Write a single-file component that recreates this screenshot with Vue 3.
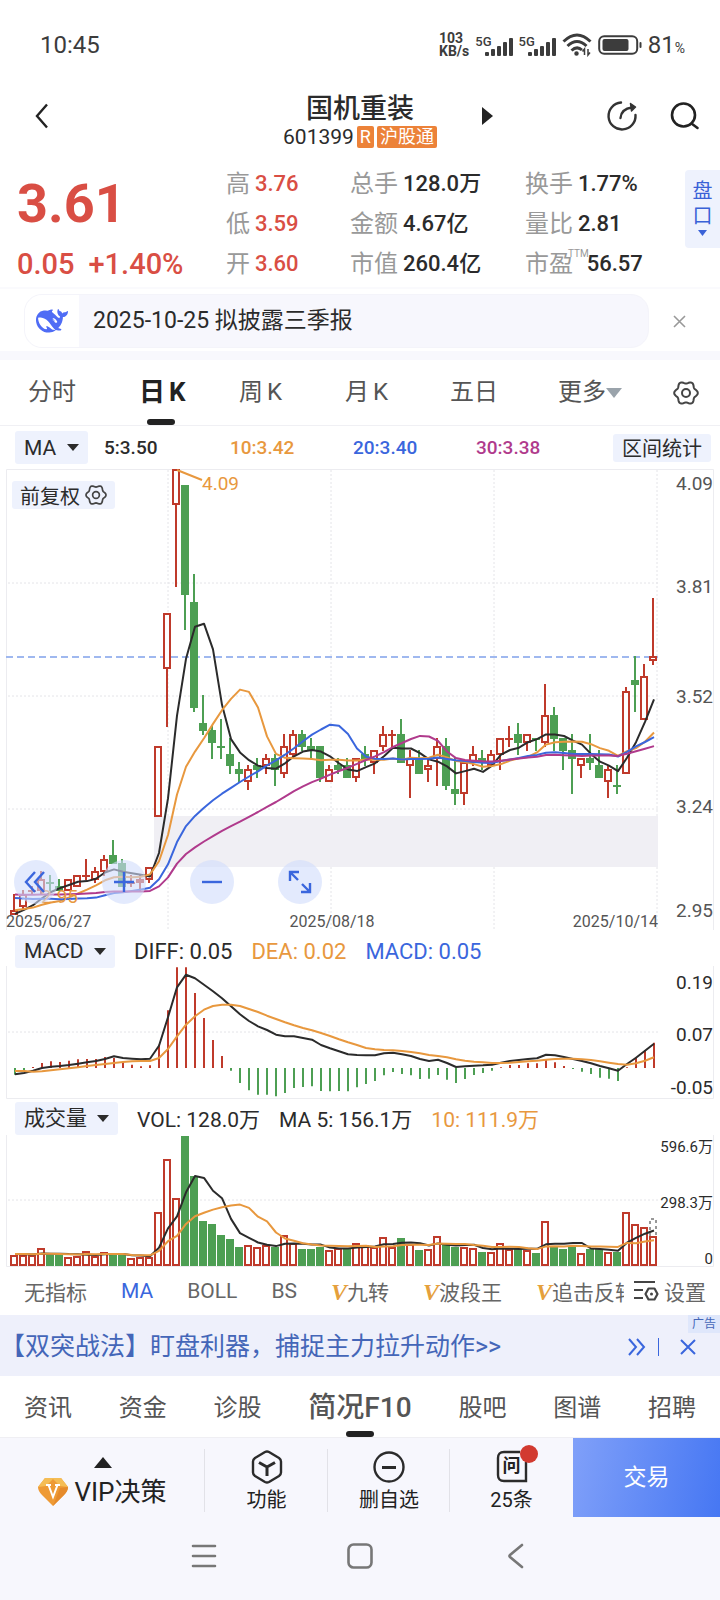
<template>
  <div class="app">
    <header class="status-bar">
      <span class="clock">10:45</span>
      <div class="status-icons">
        <span class="net-speed">103<br />KB/s</span>
        <span v-for="n in 2" :key="n" class="signal">
          <small>5G</small>
          <svg width="28" height="18" viewBox="0 0 28 18" fill="#3c3c3c">
            <rect x="0" y="14" width="4" height="4" rx="1" />
            <rect x="6" y="11" width="4" height="7" rx="1" />
            <rect x="12" y="8" width="4" height="10" rx="1" />
            <rect x="18" y="4" width="4" height="14" rx="1" />
            <rect x="24" y="0" width="4" height="18" rx="1" />
          </svg>
        </span>
        <svg class="wifi" width="30" height="24" viewBox="0 0 30 24" fill="none" stroke="#3c3c3c" stroke-width="3">
          <path d="M1.500 8.500 Q15 -4.500 28.500 8.500" />
          <path d="M5.500 13 Q15 4 24.500 13" />
          <path d="M9.500 17.500 Q15 12.500 20 17" />
          <circle cx="14.500" cy="20.500" r="1.500" fill="#3c3c3c" stroke-width="1.500" />
          <path d="M22.500 22 V16 L20.500 18.500 M26 16 V22 L28 19.500" stroke-width="1.500" />
        </svg>
        <svg width="44" height="20" viewBox="0 0 44 20">
          <rect x="1.200" y="1.200" width="38" height="17.600" rx="5" fill="none" stroke="#3c3c3c" stroke-width="2" />
          <rect x="4.500" y="4" width="26" height="12" rx="2" fill="#3c3c3c" />
          <rect x="41.500" y="7" width="2" height="6" rx="1" fill="#3c3c3c" />
        </svg>
        <span class="battery">81<small>%</small></span>
      </div>
    </header>

    <div class="title-bar">
      <button class="icon-btn back" aria-label="返回">
        <svg width="14" height="26" viewBox="0 0 14 26" fill="none" stroke="#222" stroke-width="2.400">
          <path d="M12 1.500 L2 13 L12 24.500" />
        </svg>
      </button>
      <div class="stock">
        <h1>国机重装</h1>
        <p class="code">601399<span class="tag">R</span><span class="tag">沪股通</span></p>
      </div>
      <div class="title-actions">
        <button class="icon-btn next" aria-label="下一只">
          <svg width="11" height="18" viewBox="0 0 11 18"><path d="M0 0 L11 9 L0 18z" fill="#222" /></svg>
        </button>
        <button class="icon-btn" aria-label="分享">
          <svg width="32" height="32" viewBox="0 0 32 32" fill="none" stroke="#333" stroke-width="2.400" stroke-linecap="round">
            <path d="M15 2.500 A13.500 13.500 0 1 0 29.500 15" />
            <path d="M14.500 18 C15 12 18 8.500 26 7.500" />
            <path d="M24.500 3.500 L29.500 7 L25.500 11z" fill="#333" stroke-width="1.500" stroke-linejoin="round" />
          </svg>
        </button>
        <button class="icon-btn" aria-label="搜索">
          <svg width="30" height="28" viewBox="0 0 30 28" fill="none" stroke="#222" stroke-width="2.600" stroke-linecap="round">
            <circle cx="13.500" cy="13" r="11.500" />
            <path d="M21.500 21.500 L27.500 26" />
          </svg>
        </button>
      </div>
    </div>

    <section class="quote">
      <div class="price">
        <strong>3.61</strong>
        <p><span>0.05</span><span>+1.40%</span></p>
      </div>
      <dl v-for="(col, i) in quotes" :key="i">
        <div v-for="q in col" :key="q.label">
          <dt>{{ q.label }}<sup v-if="q.sup">{{ q.sup }}</sup></dt>
          <dd :class="{ up: q.up }">{{ q.value }}</dd>
        </div>
      </dl>
      <button class="pan-kou">
        <span>盘</span><span>口</span>
        <svg width="9" height="6" viewBox="0 0 9 6"><path d="M0 0h9L4.500 6z" fill="#3a62d7" /></svg>
      </button>
    </section>

    <div class="notice">
      <a href="#" class="notice-pill">
        <span class="whale">
          <svg width="32" height="32" viewBox="0 0 24 24" fill="#4f6cf5">
            <path d="M23.748 4.482c-.254-.124-.364.113-.512.234-.051.039-.094.09-.137.136-.372.397-.806.657-1.373.626-.829-.046-1.537.214-2.163.848-.133-.782-.575-1.248-1.247-1.548-.352-.156-.708-.311-.955-.65-.172-.241-.219-.51-.305-.774-.055-.16-.11-.323-.293-.35-.2-.031-.278.136-.356.276-.313.572-.434 1.202-.422 1.84.027 1.436.633 2.58 1.838 3.393.137.093.172.187.129.323-.082.28-.18.552-.266.833-.055.179-.137.217-.329.14a5.526 5.526 0 01-1.736-1.18c-.857-.828-1.631-1.742-2.597-2.458a11.365 11.365 0 00-.689-.471c-.985-.957.13-1.743.388-1.836.27-.098.093-.432-.779-.428-.872.004-1.67.295-2.687.684a3.055 3.055 0 01-.465.137 9.597 9.597 0 00-2.883-.102c-1.885.21-3.39 1.102-4.497 2.623C.082 8.606-.231 10.684.152 12.85c.403 2.284 1.569 4.175 3.36 5.653 1.858 1.533 3.997 2.284 6.438 2.14 1.482-.085 3.133-.284 4.994-1.86.47.234.962.327 1.78.397.63.059 1.236-.03 1.705-.128.735-.156.684-.837.419-.961-2.155-1.004-1.682-.595-2.113-.926 1.096-1.296 2.746-2.642 3.392-7.003.05-.347.007-.565 0-.845-.004-.17.035-.237.23-.256a4.173 4.173 0 001.545-.475c1.396-.763 1.96-2.015 2.093-3.517.02-.23-.004-.467-.247-.588zM11.581 18c-2.089-1.642-3.102-2.183-3.52-2.16-.392.024-.321.471-.235.763.09.288.207.486.371.739.114.167.192.416-.113.603-.673.416-1.842-.14-1.897-.167-1.361-.802-2.5-1.86-3.301-3.307-.774-1.393-1.224-2.887-1.298-4.482-.02-.386.093-.522.477-.592a4.696 4.696 0 011.529-.039c2.132.312 3.946 1.265 5.468 2.774.868.86 1.525 1.887 2.202 2.891.72 1.066 1.494 2.082 2.48 2.914.348.292.625.514.891.677-.802.09-2.14.11-3.054-.614zm1-6.44a.306.306 0 01.415-.287.302.302 0 01.2.288.306.306 0 01-.31.307.303.303 0 01-.304-.308zm3.11 1.596c-.2.081-.399.151-.59.16a1.245 1.245 0 01-.798-.254c-.274-.23-.47-.358-.552-.758a1.73 1.73 0 01.016-.588c.07-.327-.008-.537-.239-.727-.187-.156-.426-.199-.688-.199a.559.559 0 01-.254-.078c-.11-.054-.2-.19-.114-.358.028-.054.16-.186.192-.21.356-.202.767-.136 1.146.016.352.144.618.408 1.001.782.391.451.462.576.685.914.176.265.336.537.445.848.067.195-.019.354-.25.452z" />
          </svg>
        </span>
        <span class="notice-text">2025-10-25 拟披露三季报</span>
      </a>
      <button class="icon-btn close" aria-label="关闭">
        <svg width="13" height="13" viewBox="0 0 13 13" stroke="#999" stroke-width="1.600">
          <path d="M1 1 L12 12 M12 1 L1 12" />
        </svg>
      </button>
    </div>

    <nav class="period-tabs">
      <button v-for="t in periods" :key="t.name" :class="{ active: t.name === period }" @click="period = t.name">
        {{ t.name }}<span v-if="t.unit">{{ t.unit }}</span>
        <svg v-if="t.more" width="16" height="10" viewBox="0 0 16 10"><path d="M0 0h16L8 10z" fill="#9aa3ab" /></svg>
      </button>
      <button aria-label="设置">
        <svg width="26" height="26" viewBox="0 0 26 26" fill="none" stroke="#444" stroke-width="2">
          <path :d="gear" /><circle cx="13" cy="13" r="4" />
        </svg>
      </button>
    </nav>

    <div class="legend ma-legend">
      <label class="chip"><select aria-label="主图指标"><option>MA</option></select></label>
      <span class="num">5:3.50</span>
      <span class="num orange">10:3.42</span>
      <span class="num blue">20:3.40</span>
      <span class="num purple">30:3.38</span>
      <button class="chip-btn">区间统计</button>
    </div>

    <div class="kline">
      <svg viewBox="0 0 720 461" class="chart">
        <path d="M6.500 461 V0.500 H713.500 V461" class="frame" />
        <rect x="154" y="347" width="504" height="51" fill="#f0eff4" />
        <path v-for="gy in [114, 227, 340]" :key="gy" :d="`M8 ${gy} H658`" class="dots" />
        <path v-for="gx in [168, 331, 494, 657]" :key="gx" :d="`M${gx} 1 V347 M${gx} 398 V461`" class="dots" />
        <path d="M6 188 H658" stroke="#9fb8ef" stroke-width="2" stroke-dasharray="7 4" />
        <g v-for="(c, i) in candles" :key="i" :class="c.up ? 'rise' : 'fall'">
          <path :d="c.wick" />
          <path v-if="c.flat" :d="c.flat" />
          <rect v-else :x="c.x" :y="c.y" width="6" :height="c.h" />
        </g>
        <polyline v-for="m in maLines" :key="m.days" :points="m.points" :stroke="m.color" class="line" />
        <text x="41" y="434" class="mark">2.95</text>
        <path d="M177 1 L202 11" stroke="#e8983e" stroke-width="2" />
        <text x="202" y="21" class="mark">4.09</text>
        <text v-for="l in priceLabels" :key="l.text" x="713" :y="l.y" class="axis">{{ l.text }}</text>
        <text x="6" y="458" class="date">2025/06/27</text>
        <text x="332" y="458" class="date" text-anchor="middle">2025/08/18</text>
        <text x="658" y="458" class="date" text-anchor="end">2025/10/14</text>
      </svg>
      <button class="chip-btn restore">
        前复权
        <svg width="22" height="22" viewBox="0 0 26 26" fill="none" stroke="#444" stroke-width="2">
          <path :d="gear" /><circle cx="13" cy="13" r="4" />
        </svg>
      </button>
      <div class="tools">
        <button v-for="t in tools" :key="t.label" :aria-label="t.label">
          <svg width="28" height="28" viewBox="0 0 28 28" fill="none" stroke="#3a66dd" stroke-width="2.400">
            <path :d="t.d" />
          </svg>
        </button>
      </div>
    </div>

    <div class="legend sub-legend">
      <label class="chip"><select aria-label="副图指标"><option>MACD</option></select></label>
      <span>DIFF: 0.05</span>
      <span class="orange">DEA: 0.02</span>
      <span class="blue">MACD: 0.05</span>
    </div>
    <svg viewBox="0 0 720 133" class="chart">
      <path d="M6.500 0 V132.500 H713.500 V0" class="frame" />
      <path d="M8 66 H658" class="dots" />
      <path v-for="(b, i) in macd" :key="i" :d="b.d" :stroke="b.color" stroke-width="2" />
      <polyline :points="diffLine" stroke="#2b2b2b" class="line" />
      <polyline :points="deaLine" stroke="#e8983e" class="line" />
      <text x="713" y="23" class="axis dark">0.19</text>
      <text x="713" y="75" class="axis dark">0.07</text>
      <text x="713" y="128" class="axis dark">-0.05</text>
    </svg>

    <div class="legend sub-legend volume-legend">
      <label class="chip"><select aria-label="成交量指标"><option>成交量</option></select></label>
      <span>VOL: 128.0万</span>
      <span>MA 5: 156.1万</span>
      <span class="orange">10: 111.9万</span>
    </div>
    <svg viewBox="0 0 720 132" class="chart">
      <path d="M6.500 0 V131.500 H713.500 V0" class="frame" />
      <path d="M8 65 H658" class="dots" />
      <rect
        v-for="(b, i) in volumeBars"
        :key="i"
        :class="b.up ? 'rise' : 'fall'"
        :x="b.x"
        :y="b.y"
        width="6"
        :height="b.h"
      />
      <path d="M650 101 V84 H656 V101" fill="none" stroke="#333" stroke-dasharray="3 3" />
      <polyline v-for="m in volLines" :key="m.days" :points="m.points" :stroke="m.color" class="line" />
      <text x="713" y="17" class="axis small">596.6万</text>
      <text x="713" y="73" class="axis small">298.3万</text>
      <text x="713" y="129" class="axis small">0</text>
    </svg>

    <nav class="indicators">
      <div class="indicator-list">
        <button>无指标</button>
        <button class="blue">MA</button>
        <button>BOLL</button>
        <button>BS</button>
        <button v-for="v in ['九转', '波段王', '追击反转']" :key="v"><b>V</b>{{ v }}</button>
      </div>
      <button class="setup">
        <svg width="26" height="22" viewBox="0 0 26 22" fill="none" stroke="#444" stroke-width="2.200">
          <path d="M1 2 H22 M1 10 H10 M1 18 H10 M15.500 8.500 h6 l3 5.500 l-3 5.500 h-6 l-3 -5.500z" stroke-linejoin="round" />
          <circle cx="18.500" cy="14" r="1.500" fill="#444" stroke="none" />
        </svg>
        设置
      </button>
    </nav>

    <aside class="promo">
      <a href="#">【双突战法】盯盘利器，捕捉主力拉升动作&gt;&gt;</a>
      <svg width="18" height="18" viewBox="0 0 18 18" fill="none" stroke="#3a66dd" stroke-width="2">
        <path d="M1 1 L8 9 L1 17 M9 1 L16 9 L9 17" />
      </svg>
      <i></i>
      <button class="icon-btn" aria-label="关闭广告">
        <svg width="16" height="16" viewBox="0 0 16 16" stroke="#3a66dd" stroke-width="2">
          <path d="M1 1 L15 15 M15 1 L1 15" />
        </svg>
      </button>
      <small>广告</small>
    </aside>

    <nav class="info-tabs">
      <button v-for="t in infoTabs" :key="t" :class="{ active: t === infoTab }" @click="infoTab = t">{{ t }}</button>
    </nav>

    <footer class="actions">
      <button class="vip">
        <svg width="18" height="11" viewBox="0 0 18 11"><path d="M9 0 L18 11 H0z" fill="#222" /></svg>
        <span>
          <svg width="30" height="28" viewBox="0 0 30 28">
            <path d="M7 0 H23 L30 9 Q30 13 26 17 L15 28 L4 17 Q0 13 0 9z" fill="#ee9a35" />
            <path d="M7 0 H23 L30 9 L22 8 L15 1 L8 8 L0 9z" fill="#f5bd55" />
            <path d="M15 28 L26 17 Q30 13 30 9 L22 10z" fill="#e58a2b" />
            <path d="M8 7 h5 M17 7 h5 M10.500 7 L15 19 L19.500 7" fill="none" stroke="#fff" stroke-width="2" />
          </svg>
          VIP决策
        </span>
      </button>
      <button>
        <svg width="32" height="34" viewBox="0 0 32 34" fill="none" stroke="#2b2b2b" stroke-width="2.400" stroke-linejoin="round">
          <path d="M14 2 Q16 1 18 2 L28 8 Q30 9.500 30 11.500 V22.500 Q30 24.500 28 26 L18 32 Q16 33 14 32 L4 26 Q2 24.500 2 22.500 V11.500 Q2 9.500 4 8z" />
          <path d="M8 12.500 L16 17 L24 12.500 M16 17 V26" stroke-width="3" />
        </svg>
        功能
      </button>
      <button>
        <svg width="32" height="34" viewBox="0 0 32 34" fill="none" stroke="#2b2b2b" stroke-width="2.400">
          <circle cx="16" cy="17" r="14.500" />
          <path d="M9 17.500 H23" stroke-width="3" />
        </svg>
        删自选
      </button>
      <button>
        <span class="ask">
          <svg width="32" height="34" viewBox="0 0 32 34" fill="none" stroke="#2b2b2b" stroke-width="2.400">
            <path d="M30 12 V31 H8 Q2 31 2 25 V8 Q2 2 8 2 H24" />
          </svg>
          <em>问</em>
          <i class="dot"></i>
        </span>
        25条
      </button>
      <button class="trade">交易</button>
    </footer>

    <nav class="system-nav">
      <svg width="26" height="26" viewBox="0 0 26 26" fill="none" stroke="#777" stroke-width="2.600" stroke-linecap="round">
        <path d="M2 3 H24 M2 13 H24 M2 23 H24" />
      </svg>
      <svg width="26" height="26" viewBox="0 0 26 26" fill="none" stroke="#777" stroke-width="2.600">
        <rect x="1.500" y="1.500" width="23" height="23" rx="5" />
      </svg>
      <svg width="26" height="26" viewBox="0 0 26 26" fill="none" stroke="#777" stroke-width="2.600" stroke-linecap="round">
        <path d="M19 2 L7 12 Q6 13 7 14 L19 24" />
      </svg>
    </nav>
  </div>
</template>

<script setup>
import { ref } from "vue";

const period = ref("日");
const infoTab = ref("简况F10");

const quotes = [
  [
    { label: "高", value: "3.76", up: true },
    { label: "低", value: "3.59", up: true },
    { label: "开", value: "3.60", up: true },
  ],
  [
    { label: "总手", value: "128.0万" },
    { label: "金额", value: "4.67亿" },
    { label: "市值", value: "260.4亿" },
  ],
  [
    { label: "换手", value: "1.77%" },
    { label: "量比", value: "2.81" },
    { label: "市盈", value: "56.57", sup: "TTM" },
  ],
];

const periods = [
  { name: "分时" },
  { name: "日", unit: "K" },
  { name: "周", unit: "K" },
  { name: "月", unit: "K" },
  { name: "五日" },
  { name: "更多", more: true },
];

const infoTabs = ["资讯", "资金", "诊股", "简况F10", "股吧", "图谱", "招聘"];

const tools = [
  { label: "最早", d: "M13 4 L4 14 L13 24 M22 4 L13 14 L22 24" },
  { label: "放大", d: "M14 4 V24 M4 14 H24" },
  { label: "缩小", d: "M4 14 H24" },
  { label: "全屏", d: "M4 13 V4 H13 M4 4 L12 12 M24 15 V24 H15 M24 24 L16 16" },
];

const priceLabels = [
  { text: "4.09", y: 21 },
  { text: "3.81", y: 124 },
  { text: "3.52", y: 234 },
  { text: "3.24", y: 344 },
  { text: "2.95", y: 448 },
];

// open, high, low, close in cents
const days = [
  [295, 300, 295, 296], [297, 301, 296, 300], [301, 302, 300, 301], [301, 306, 300, 304],
  [303, 305, 301, 303], [302, 304, 301, 301], [301, 304, 301, 304], [302, 305, 302, 305],
  [305, 309, 304, 305], [304, 307, 303, 306], [306, 310, 305, 309], [310, 314, 308, 308],
  [308, 309, 302, 302], [303, 305, 302, 303], [303, 305, 301, 304], [304, 307, 303, 307],
  [320, 338, 320, 338], [358, 372, 343, 372], [400, 409, 379, 409], [405, 405, 368, 377],
  [375, 382, 347, 348], [344, 351, 341, 342], [342, 343, 335, 339], [338, 345, 335, 338],
  [336, 340, 331, 333], [332, 334, 329, 331], [329, 333, 327, 332], [333, 335, 330, 332],
  [333, 336, 331, 335], [335, 336, 328, 332], [331, 341, 330, 338], [336, 342, 335, 341],
  [341, 342, 337, 338], [338, 340, 335, 337], [338, 338, 329, 330], [329, 333, 329, 332],
  [333, 335, 331, 332], [333, 335, 330, 330], [330, 335, 329, 335], [336, 338, 333, 335],
  [334, 337, 331, 337], [338, 343, 337, 341], [341, 342, 338, 341], [341, 345, 334, 334],
  [333, 337, 325, 335], [335, 337, 331, 331], [332, 335, 329, 333], [335, 340, 328, 338],
  [338, 340, 327, 328], [327, 335, 323, 326], [326, 334, 323, 334], [334, 338, 333, 336],
  [335, 337, 332, 334], [333, 337, 333, 336], [336, 340, 332, 340], [340, 343, 338, 340],
  [341, 344, 336, 339], [339, 341, 337, 341], [340, 340, 337, 340], [339, 354, 338, 346],
  [346, 348, 337, 340], [340, 340, 332, 337], [337, 341, 326, 335], [333, 335, 330, 335],
  [335, 341, 332, 334], [333, 337, 330, 330], [329, 333, 325, 332], [328, 333, 326, 328],
  [331, 353, 331, 352], [355, 361, 347, 354], [345, 359, 345, 356], [360, 376, 359, 361],
];

const volumes = [
  52, 49, 49, 81, 52, 49, 43, 46, 70, 46, 63, 49, 49, 38, 43, 43, 248, 491, 314, 597, 415, 207, 193, 144,
  122, 89, 98, 86, 95, 89, 141, 104, 80, 80, 86, 73, 83, 80, 104, 95, 86, 133, 89, 129, 101, 72, 80, 138,
  95, 86, 86, 83, 64, 64, 104, 80, 77, 73, 61, 207, 92, 80, 89, 60, 80, 80, 64, 64, 246, 191, 177, 136,
];

// closes before the first visible day, needed by the long averages
const earlier = [
  ...Array(10).fill(302), ...Array(9).fill(303), ...Array(6).fill(297), ...Array(4).fill(295),
];

const macdBars = [
  -20, -8, 3, 15, 20, 18, 22, 26, 27, 27, 33, 30, 19, 10, 5, 8, 70, 173, 302, 302, 225, 150, 84, 36,
  -8, -45, -67, -80, -80, -85, -75, -60, -57, -55, -69, -70, -69, -70, -58, -48, -39, -22, -12, -18, -22, -33, -32, -21,
  -35, -45, -33, -21, -15, -8, 2, 9, 9, 14, 14, 24, 17, 6, -3, -11, -18, -29, -32, -39, 2, 32, 54, 76,
];
const diff = [
  -19, -15, -8, 0, 4, 6, 9, 13, 17, 21, 27, 35, 30, 28, 26, 28, 67, 152, 242, 280, 269, 250, 230, 209,
  185, 161, 141, 125, 114, 100, 95, 95, 90, 85, 69, 59, 50, 41, 39, 38, 38, 44, 46, 41, 36, 27, 21, 25,
  15, 3, 5, 7, 8, 10, 16, 21, 24, 27, 29, 40, 38, 33, 27, 21, 14, 6, -1, -8, 12, 31, 52, 73,
];
const dea = [
  -9, -9, -11, -10, -7, -4, -1, 2, 6, 9, 12, 15, 18, 20, 21, 21, 30, 57, 95, 130, 155, 175, 186, 190,
  190, 186, 177, 168, 157, 147, 137, 128, 120, 113, 105, 96, 86, 77, 69, 60, 56, 54, 53, 51, 48, 44, 39, 36,
  32, 26, 22, 19, 17, 15, 15, 16, 18, 20, 22, 25, 27, 28, 28, 26, 24, 20, 16, 12, 10, 14, 22, 32,
];

const STEP = 9;
const cx = (i) => 14 + i * STEP;
const priceY = (p) => Math.round((409 - p) * 3.9);
const toPoints = (values, y) => values.map((v, i) => `${cx(i) + 1},${y(v).toFixed(1)}`).join(" ");

const average = (values, before, n) => {
  const all = [...before, ...values];
  return values.map((_, i) => {
    const end = before.length + i + 1;
    return all.slice(end - n, end).reduce((a, b) => a + b, 0) / n;
  });
};

const closes = days.map((d) => d[3]);

const candles = days.map(([open, high, low, close], i) => {
  const up = close > open || (close === open && close >= (closes[i - 1] ?? 0));
  const x = cx(i);
  const top = priceY(Math.max(open, close));
  const bottom = priceY(Math.min(open, close));
  return {
    up,
    x: x - 3,
    y: top + 1,
    h: Math.max(bottom - top - 1, 2),
    flat: open === close ? `M${x - 4} ${top + 1} H${x + 4}` : "",
    // two pieces, so the wick does not cross a hollow body
    wick: `M${x} ${priceY(high)} V${top} M${x} ${bottom} V${priceY(low) + 1}`,
  };
});

const maLines = [
  { days: 5, color: "#2b2b2b" },
  { days: 10, color: "#e8983e" },
  { days: 20, color: "#3a66dd" },
  { days: 30, color: "#b03a8c" },
].map((m) => ({
  ...m,
  points: toPoints(average(closes, earlier, m.days), (p) => (409 - p) * 3.9 + 1),
}));

const macd = macdBars.map((v, i) => ({
  d: `M${cx(i) + 1} 102 V${102 - v / 3}`,
  color: v > 0 ? "#bf3a2b" : "#4d9f53",
}));
const diffLine = toPoints(diff, (v) => 102 - v / 3);
const deaLine = toPoints(dea, (v) => 102 - v / 3);

const volumeBars = volumes.map((v, i) => {
  const h = Math.round((v * 130) / 597);
  return { x: cx(i) - 3, y: 132 - h, h: h - 2, up: i === 0 || closes[i] >= closes[i - 1] };
});
const volLines = [
  { days: 5, color: "#2b2b2b" },
  { days: 10, color: "#e8983e" },
].map((m) => ({
  ...m,
  points: toPoints(average(volumes, Array(9).fill(56), m.days), (v) => 131 - (v * 130) / 597),
}));

// six-lobed gear outline
const gear =
  "M" +
  Array.from({ length: 72 }, (_, k) => {
    const a = (k * Math.PI) / 36;
    const r = 10.6 + 1.2 * Math.cos(6 * a);
    return `${(13 + r * Math.cos(a)).toFixed(2)} ${(13 + r * Math.sin(a)).toFixed(2)}`;
  }).join("L") +
  "Z";
</script>

<style>
body {
  margin: 0;
  background: #f7f7fd;
}
</style>

<style scoped>
.app {
  background: #fff;
  color: #2b2b2b;
  font-family: Roboto, "Noto Sans CJK SC", sans-serif;
  font-size: 22px;
}

button {
  border: none;
  padding: 0;
  margin: 0;
  background: none;
  color: inherit;
  font: inherit;
  cursor: pointer;
  white-space: nowrap;
}

a {
  color: inherit;
  text-decoration: none;
}

svg {
  flex: none;
}

h1,
p,
dl,
dd {
  margin: 0;
}

.orange {
  color: #e8983e;
}

.blue {
  color: #3a66dd;
}

.purple {
  color: #b03a8c;
}

.status-bar {
  display: flex;
  justify-content: space-between;
  align-items: center;
  height: 90px;
  padding: 0 35px 0 40px;
  color: #3c3c3c;
}

.clock {
  font-size: 24px;
}

.status-icons {
  display: flex;
  align-items: center;
  gap: 6px;
}

.net-speed {
  font-size: 14px;
  line-height: 13px;
  font-weight: 700;
}

.signal {
  display: flex;
  align-items: flex-end;
}

.signal small {
  align-self: flex-start;
  margin-right: -7px;
  font-size: 13px;
  line-height: 14px;
  font-weight: 500;
}

.signal svg {
  margin-top: 3px;
}

.battery {
  font-size: 24px;
}

.battery small {
  font-size: 14px;
}

.title-bar {
  display: grid;
  grid-template-columns: 1fr auto 1fr;
  align-items: center;
  height: 60px;
  padding: 0 20px;
}

.icon-btn {
  display: flex;
}

.back,
.title-actions {
  margin-bottom: 8px;
}

.back {
  padding-left: 15px;
}

.title-actions {
  display: flex;
  align-items: center;
  gap: 32px;
}

.next {
  flex: 1;
  padding-left: 45px;
}

.stock {
  text-align: center;
}

.stock h1 {
  font-size: 27px;
  line-height: 34px;
  font-weight: 500;
}

.code {
  display: flex;
  align-items: center;
  gap: 3px;
  font-size: 21px;
  line-height: 22px;
}

.tag {
  padding: 0 3px;
  border-radius: 2px;
  background: #ec8239;
  color: #fff;
  font-size: 18px;
}

.quote {
  display: grid;
  grid-template-columns: 209fr 124fr 175fr 160fr 35px;
  margin-top: 14px;
  padding: 0 0 3px 17px;
  line-height: 40px;
}

.price,
.up {
  color: #d94e44;
}

.price strong {
  display: block;
  font-size: 54px;
  line-height: 80px;
}

.price p {
  display: flex;
  gap: 14px;
  font-size: 29px;
  font-weight: 500;
}

.quote dl div {
  display: flex;
  gap: 5px;
  white-space: nowrap;
}

.quote dt {
  display: flex;
  color: #999;
  font-size: 24px;
}

.quote dt sup {
  margin: 4px -7px 0 -5px;
  font-size: 10px;
  line-height: 12px;
}

.quote dd {
  font-weight: 500;
}

.pan-kou {
  display: flex;
  flex-direction: column;
  align-items: center;
  align-self: start;
  gap: 3px;
  margin-top: 6px;
  padding: 10px 0 12px;
  border-radius: 4px 0 0 4px;
  background: #eef2fd;
  color: #3a62d7;
  font-size: 20px;
  line-height: 22px;
}

.notice {
  display: flex;
  align-items: center;
  gap: 24px;
  padding: 5px 34px 3px 24px;
  border-top: 2px solid #fafafd;
  border-bottom: 9px solid #f8f8fd;
}

.notice-pill {
  display: flex;
  flex: 1;
  overflow: hidden;
  border: 1px solid #f4f4fa;
  border-radius: 18px;
  background: #f7f7fd;
  font-size: 23px;
  line-height: 52px;
}

.whale {
  display: flex;
  align-items: center;
  padding: 0 11px;
  background: #fff;
}

.notice-text {
  padding-left: 14px;
}

.period-tabs {
  display: grid;
  grid-template-columns: 111fr 100fr 106fr 105fr 108fr 115fr 47fr;
  padding-left: 28px;
  border-bottom: 1px solid #f0f0f4;
  color: #555;
  font-size: 24px;
  line-height: 65px;
}

.period-tabs button {
  position: relative;
  display: flex;
  align-items: center;
}

.period-tabs span {
  margin-left: 4px;
}

.active {
  font-size: 26px;
  font-weight: 700;
}

.period-tabs .active {
  color: #222;
}

.period-tabs .active::after,
.info-tabs .active::after {
  content: "";
  position: absolute;
  bottom: 0;
  left: 8px;
  width: 28px;
  height: 6px;
  border-radius: 3px;
  background: #222;
}

.legend {
  display: flex;
  align-items: center;
  gap: 19px;
  height: 36px;
  padding-left: 15px;
}

.ma-legend {
  display: grid;
  grid-template-columns: 89fr 126fr 123fr 123fr 137fr 98px;
  gap: 0;
  height: 43px;
  padding-right: 9px;
}

.sub-legend {
  height: 30px;
  padding-top: 6px;
}

.volume-legend {
  height: 34px;
  padding-top: 2px;
  font-size: 21px;
}

.num {
  font-size: 19px;
  font-weight: 500;
}

.chip {
  position: relative;
  justify-self: start;
}

.chip select {
  height: 33px;
  padding: 0 31px 0 9px;
  border: none;
  border-radius: 3px;
  background: #eef2fd;
  color: inherit;
  font: inherit;
  font-size: 21px;
  appearance: none;
}

.chip::after {
  content: "";
  position: absolute;
  top: 13px;
  right: 9px;
  border: 6px solid transparent;
  border-top: 7px solid #2b2b2b;
  border-bottom: none;
}

.chip-btn {
  display: flex;
  align-items: center;
  justify-content: center;
  gap: 5px;
  height: 28px;
  border-radius: 3px;
  background: #eef2fd;
  font-size: 20px;
}

.kline {
  position: relative;
}

.restore {
  position: absolute;
  top: 12px;
  left: 12px;
  padding: 0 8px;
}

.tools {
  position: absolute;
  left: 2%;
  bottom: 26px;
  display: flex;
  gap: 44px;
}

.tools button {
  display: flex;
  align-items: center;
  justify-content: center;
  width: 44px;
  height: 44px;
  border-radius: 50%;
  background: rgba(208, 220, 252, 0.6);
}

.chart {
  display: block;
  width: 100%;
  overflow: visible;
}

.frame {
  fill: none;
  stroke: #ececf0;
}

.dots {
  stroke: #e4e4e8;
  stroke-dasharray: 2 2;
}

.line {
  fill: none;
  stroke-width: 2;
  stroke-linejoin: round;
}

.rise {
  fill: #fff;
  stroke: #bf3a2b;
  stroke-width: 2;
}

.fall {
  fill: #4d9f53;
  stroke: #4d9f53;
  stroke-width: 2;
}

.axis,
.mark {
  font-size: 19px;
}

.axis {
  fill: #555;
  text-anchor: end;
}

.mark {
  fill: #e8983e;
}

.date {
  fill: #555;
  font-size: 16px;
}

.dark {
  fill: #2b2b2b;
}

.small {
  fill: #2b2b2b;
  font-size: 15px;
}

.indicators {
  display: flex;
  align-items: center;
  gap: 9px;
  height: 48px;
  padding: 0 14px 0 24px;
  color: #666;
  font-size: 21px;
}

.indicator-list {
  display: flex;
  flex: 1;
  gap: 34px;
  overflow: hidden;
}

.indicators b {
  color: #e5a03c;
  font-family: "Liberation Serif", serif;
  font-style: italic;
  font-size: 24px;
  line-height: 24px;
}

.setup {
  display: flex;
  align-items: center;
  gap: 5px;
}

.promo {
  position: relative;
  display: flex;
  align-items: center;
  gap: 12px;
  padding: 3px 24px 0 0;
  background: #eef0fb;
  color: #4466b8;
  font-size: 25px;
  line-height: 58px;
}

.promo a {
  flex: 1;
  white-space: nowrap;
}

.promo i {
  width: 1px;
  height: 18px;
  margin-right: 9px;
  background: #3a66dd;
}

.promo small {
  position: absolute;
  top: 0;
  right: 0;
  padding: 0 4px;
  background: #dfe7fb;
  font-size: 12px;
  line-height: 18px;
}

.info-tabs {
  display: flex;
  justify-content: space-between;
  padding: 3px 24px 0;
  color: #555;
  font-size: 24px;
  line-height: 58px;
}

.info-tabs button {
  position: relative;
}

.info-tabs .active {
  font-size: 28px;
  font-weight: 500;
}

.info-tabs .active::after {
  left: 50%;
  margin-left: -14px;
}

.actions {
  display: grid;
  grid-template-columns: 205fr 123fr 122fr 123fr 147fr;
  height: 80px;
  border-top: 1px solid #efeff3;
  box-sizing: border-box;
  background: #f7f7fd;
  color: #222;
  font-size: 20px;
}

.actions button {
  position: relative;
  display: flex;
  flex-direction: column;
  align-items: center;
  justify-content: center;
  gap: 3px;
  padding-top: 8px;
  line-height: 26px;
}

.actions button:nth-child(-n + 3)::after {
  content: "";
  position: absolute;
  top: 11px;
  right: 0;
  bottom: 5px;
  width: 1px;
  background: #e2e2e8;
}

.actions .vip {
  gap: 10px;
  font-size: 26px;
}

.vip span {
  display: flex;
  align-items: center;
  gap: 6px;
}

.ask {
  position: relative;
  display: flex;
}

.ask em {
  position: absolute;
  top: 4px;
  left: 7px;
  font-size: 18px;
  font-style: normal;
  font-weight: 700;
  line-height: 24px;
}

.dot {
  position: absolute;
  top: -5px;
  right: -10px;
  width: 18px;
  height: 18px;
  border-radius: 50%;
  background: #d23a30;
}

.actions .trade {
  padding-top: 0;
  background: linear-gradient(100deg, #80a0f9, #4677f3);
  color: #fff;
  font-size: 23px;
}

.system-nav {
  display: flex;
  justify-content: center;
  gap: 130px;
  padding: 26px 0 30px;
  background: #f7f7fd;
}
</style>
